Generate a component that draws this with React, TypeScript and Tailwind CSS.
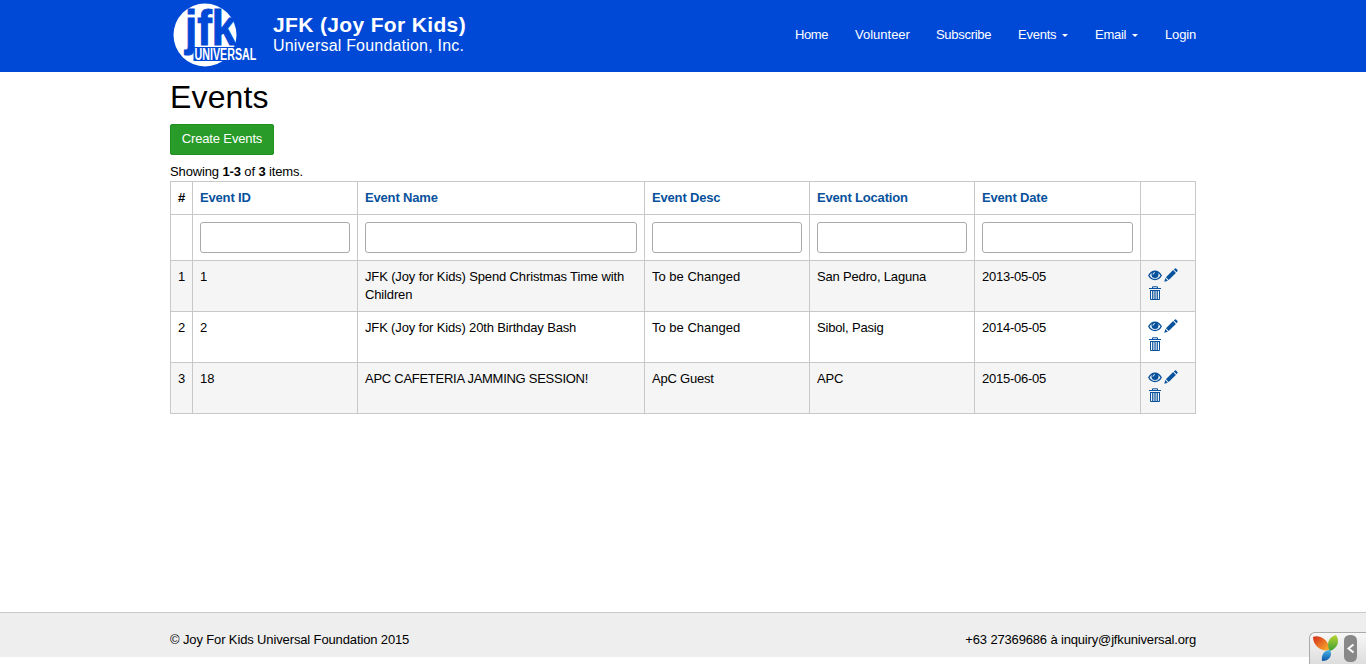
import { useState } from "react";

const events = [
  { id: "1", name: "JFK (Joy for Kids) Spend Christmas Time with Children", desc: "To be Changed", location: "San Pedro, Laguna", date: "2013-05-05", nameClass: "tracking-[-0.14px]", descClass: "" },
  { id: "2", name: "JFK (Joy for Kids) 20th Birthday Bash", desc: "To be Changed", location: "Sibol, Pasig", date: "2014-05-05", nameClass: "tracking-[-0.15px]", descClass: "" },
  { id: "18", name: "APC CAFETERIA JAMMING SESSION!", desc: "ApC Guest", location: "APC", date: "2015-06-05", nameClass: "tracking-[-0.27px]", descClass: "tracking-[-0.2px]" },
];

const columns = ["Event ID", "Event Name", "Event Desc", "Event Location", "Event Date"];

function Logo() {
  return (
    <svg width="88" height="72" viewBox="0 0 88 72" className="block shrink-0">
      <circle cx="35" cy="35" r="31.5" fill="#fff" />
      <g fontFamily="Liberation Sans" fontWeight="700">
        <text transform="translate(15 45) scale(0.88 1)" fontSize="50" fill="#0049d7" stroke="#0049d7" strokeWidth="1">jfk</text>
        <rect x="23.500" y="47" width="63" height="14" fill="#0049d7" />
        <text transform="translate(24.500 60.200) scale(0.63 1)" fontSize="17" fill="#fff">UNIVERSAL</text>
      </g>
    </svg>
  );
}

function Caret() {
  return <span className="ml-[6px] inline-block border-x-[3px] border-t-[3px] border-x-transparent border-t-white align-middle" />;
}

function EyeIcon() {
  return (
    <svg width="14" height="14" viewBox="0 0 14 14" className="block">
      <path d="M.8 7.500C2.300 4.600 4.400 3.200 7 3.200S11.700 4.600 13.200 7.500C11.700 10.200 9.600 11.500 7 11.500S2.300 10.200 .8 7.500Z" fill="none" stroke="#08519c" strokeWidth="1.400" />
      <circle cx="7" cy="6.600" r="3.500" fill="#08519c" />
      <path d="M5 6.500Q5.100 4.800 6.800 4.600" fill="none" stroke="#fff" strokeWidth="1" />
    </svg>
  );
}

function PencilIcon() {
  return (
    <svg width="14" height="14" viewBox="0 0 14 14" className="block" fill="#08519c">
      <path d="M0.300 13.700 1.300 10.100 3.900 12.700ZM1.900 9.300 9.100 2.100 11.900 4.900 4.700 12.100ZM9.800 1.400 11 .4q.5-.4 1 0L13.500 2q.4.500 0 1L12.600 4.200Z" />
    </svg>
  );
}

function TrashIcon() {
  return (
    <svg width="14" height="14" viewBox="0 0 14 14" className="block" fill="none" stroke="#08519c">
      <path d="M1 2.500H13M4.500 2.500V.8H9.500V2.500M2 4.500H12M2.500 4V13.500H11.500V4" />
      <path d="M4.750 5V13M7 5V13M9.250 5V13" strokeWidth="1.200" />
    </svg>
  );
}

export default function App() {
  const [filters, setFilters] = useState<Record<string, string>>({});
  return (
    <div className="relative flex h-[664px] flex-col overflow-hidden bg-white font-['Liberation_Sans',Arial,sans-serif] text-[13px] leading-[18px] text-black">
      <header className="h-[72px] shrink-0 bg-[#0049d7] text-white">
        <div className="mx-auto flex w-[1026px] justify-between">
          <a href="#" className="flex">
            <Logo />
            <span className="ml-[15px] pt-[14px]">
              <span className="block text-[21px] leading-[21px] font-bold tracking-[0.35px] whitespace-nowrap">JFK (Joy For Kids)</span>
              <span className="block text-[16px] leading-[21px] tracking-[0.2px] whitespace-nowrap">Universal Foundation, Inc.</span>
            </span>
          </a>
          <nav className="flex gap-[27px] pt-[26px] whitespace-nowrap">
            <a href="#" className="w-[33px] tracking-[-0.4px]">Home</a>
            <a href="#" className="w-[54px]">Volunteer</a>
            <a href="#" className="w-[55px] tracking-[-0.3px]">Subscribe</a>
            <a href="#" className="w-[50px] tracking-[-0.25px]">Events<Caret /></a>
            <a href="#" className="w-[43px] tracking-[-0.25px]">Email<Caret /></a>
            <a href="#" className="w-[31px] tracking-[-0.15px]">Login</a>
          </nav>
        </div>
      </header>
      <main className="mx-auto w-[1026px] flex-1">
        <h1 className="pt-[7px] text-[32px] leading-[36px] tracking-[0.15px]">Events</h1>
        <button className="mt-[9px] block h-[31px] w-[104px] rounded-[2px] border border-[#1f8f1f] bg-[#289b28] pb-[2px] tracking-[-0.15px] text-white">Create Events</button>
        <div className="mt-[8px] h-[18px] tracking-[-0.13px]">Showing <b>1-3</b> of <b>3</b> items.</div>
        <table className="w-[1026px] table-fixed border-collapse [&_td]:border [&_td]:border-[#c8c8c8] [&_td]:px-[7px] [&_td]:align-top [&_th]:border [&_th]:border-[#c8c8c8] [&_th]:px-[7px] [&_th]:text-left">
          <colgroup>
            <col className="w-[22px]" /><col className="w-[165px]" /><col className="w-[287px]" /><col className="w-[165px]" /><col className="w-[165px]" /><col className="w-[166px]" /><col className="w-[55px]" />
          </colgroup>
          <thead>
            <tr className="h-[33px] tracking-[-0.17px] text-[#08519c]">
              <th className="text-black">#</th>
              {columns.map((c) => <th key={c}><a href="#">{c}</a></th>)}
              <th />
            </tr>
            <tr className="h-[46px]">
              <td />
              {columns.map((c) => (
                <td key={c} className="pt-[7px]">
                  <input aria-label={c} value={filters[c] ?? ""} onChange={(e) => setFilters({ ...filters, [c]: e.target.value })} className="block h-[31px] w-full rounded-[3px] border border-[#aaa] bg-white px-2" />
                </td>
              ))}
              <td />
            </tr>
          </thead>
          <tbody>
            {events.map((e, i) => (
              <tr key={e.id} className="h-[51px] odd:bg-[#f5f5f5] [&>td]:pt-[7px]">
                <td>{i + 1}</td>
                <td>{e.id}</td>
                <td className={e.nameClass}>{e.name}</td>
                <td className={e.descClass}>{e.desc}</td>
                <td className="tracking-[-0.17px]">{e.location}</td>
                <td className="tracking-[-0.25px]">{e.date}</td>
                <td>
                  <div className="flex h-[36px] flex-wrap content-start gap-x-[2px] gap-y-[4px]">
                    <a href="#" title="View"><EyeIcon /></a>
                    <a href="#" title="Update"><PencilIcon /></a>
                    <a href="#" title="Delete"><TrashIcon /></a>
                  </div>
                </td>
              </tr>
            ))}
          </tbody>
        </table>
      </main>
      <footer className="mb-[7px] h-[45px] shrink-0 border-t border-[#c8c8c8] bg-[#eee]">
        <div className="mx-auto flex w-[1026px] justify-between pt-[18px]">
          <span className="tracking-[-0.13px]">© Joy For Kids Universal Foundation 2015</span>
          <span className="tracking-[-0.16px]">+63 27369686 à inquiry@jfkuniversal.org</span>
        </div>
      </footer>
      <div className="absolute right-0 bottom-0 flex h-[32px] w-[57px] rounded-tl-[6px] border-t border-l border-[#aaa] bg-linear-to-b from-[#f7f7f7] to-[#ddd]">
        <svg width="56" height="31" viewBox="1310 633 56 31" className="block shrink-0">
          <defs>
            <linearGradient id="r" x2="1" y2="1"><stop stopColor="#d42a1c" /><stop offset="1" stopColor="#fbb42a" /></linearGradient>
            <linearGradient id="g" x2="0" y2="1"><stop stopColor="#b9d532" /><stop offset="1" stopColor="#3e9d35" /></linearGradient>
            <linearGradient id="b" x2="0" y2="1"><stop stopColor="#4ab5e8" /><stop offset="1" stopColor="#0d56a6" /></linearGradient>
          </defs>
          <path fill="url(#r)" d="M1313 637C1319 634 1330 640 1329 650C1322 652 1313 646 1313 637Z" />
          <path fill="url(#g)" d="M1336 635C1340 641 1338 648 1330 651C1326 645 1328 637 1336 635Z" />
          <path fill="url(#b)" d="M1330 650C1333 656 1329 661 1322 661C1321 655 1324 650 1330 650Z" />
          <rect x="1344" y="635" width="13" height="27" rx="5.500" fill="#888" />
          <path d="M1353.500 644.500 1348.500 648.500 1353.500 652.500" fill="none" stroke="#fff" strokeWidth="2" />
        </svg>
      </div>
    </div>
  );
}
